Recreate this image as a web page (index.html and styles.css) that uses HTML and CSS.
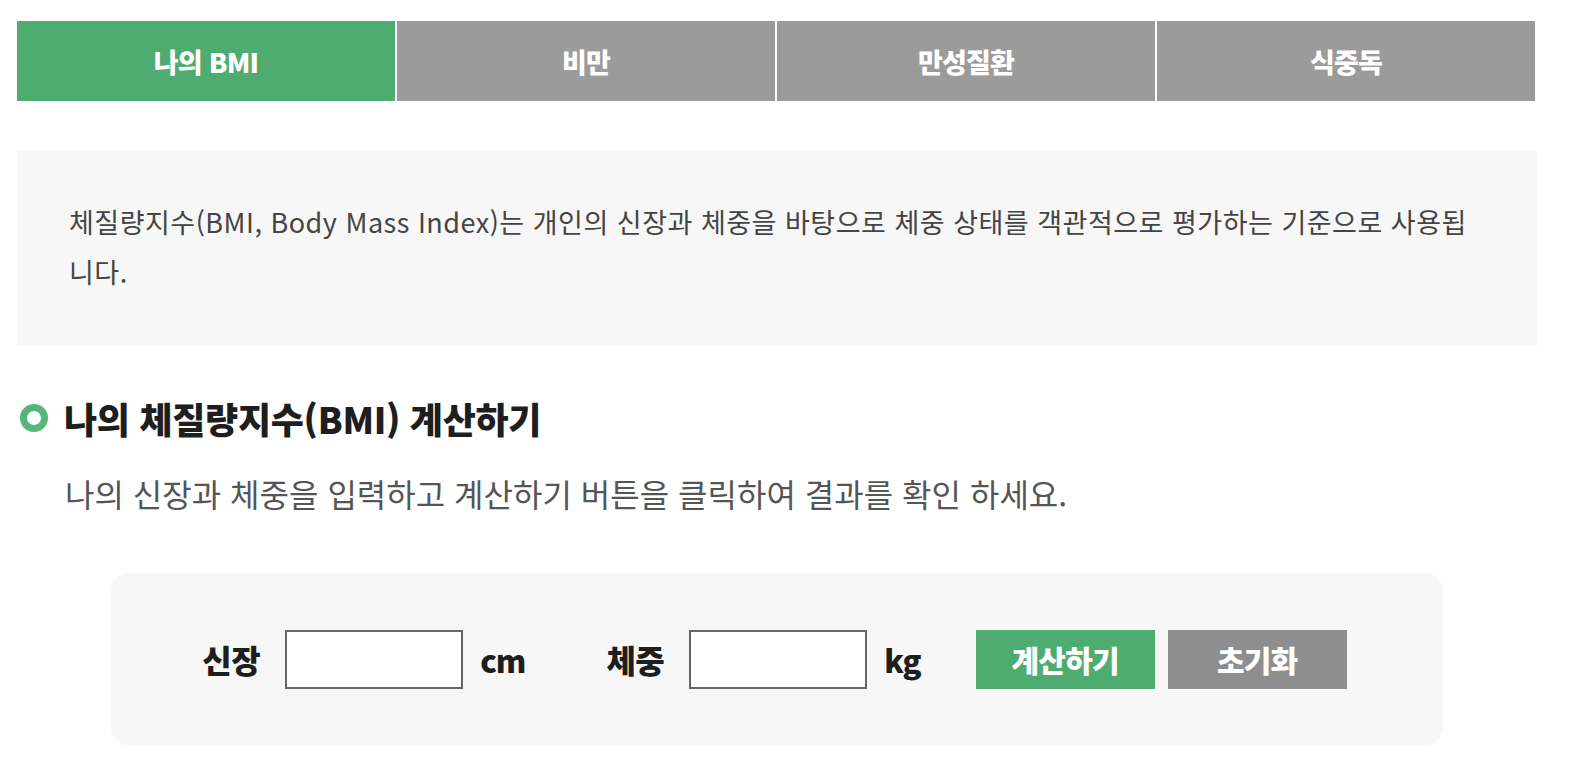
FILE: index.html
```html
<!DOCTYPE html>
<html lang="ko">
<head>
    <meta charset="UTF-8">
    <meta name="viewport" content="width=device-width, initial-scale=1.0">
    <title>나의 BMI</title>
    <link rel="stylesheet" href="styles.css">
</head>
<body>

<div class="wrap">
    <!-- Tabs -->
    <ul class="tabs">
        <li class="tab active">나의 BMI</li>
        <li class="tab">비만</li>
        <li class="tab">만성질환</li>
        <li class="tab">식중독</li>
    </ul>

    <!-- Intro box -->
    <div class="intro">
        <p>체질량지수(BMI, Body Mass Index)는 개인의 신장과 체중을 바탕으로 체중 상태를 객관적으로 평가하는 기준으로 사용됩니다.</p>
    </div>

    <!-- Calculator -->
    <h3 class="title"><span class="ring"></span>나의 체질량지수(BMI) 계산하기</h3>
    <p class="desc">나의 신장과 체중을 입력하고 계산하기 버튼을 클릭하여 결과를 확인 하세요.</p>

    <div class="calc">
        <form class="calc-row" onsubmit="return false;">
            <label class="field">
                <span class="label">신장</span>
                <input type="text" id="height">
                <span class="unit">cm</span>
            </label>
            <label class="field">
                <span class="label">체중</span>
                <input type="text" id="weight">
                <span class="unit">kg</span>
            </label>
            <div class="buttons">
                <button type="submit" class="btn btn-green">계산하기</button>
                <button type="reset" class="btn btn-gray">초기화</button>
            </div>
        </form>
    </div>
</div>

</body>
</html>
```

FILE: styles.css
```css
body {
    font-family: "Noto Sans CJK KR", "Noto Sans", sans-serif;
    margin: 0;
    background-color: #fff;
    color: #222;
}
.wrap {
    width: 1520px;
    padding: 21px 0 0 17px;
}
.tabs {
    display: flex;
    gap: 2px;
    list-style: none;
    margin: 0;
    padding: 0;
    width: 1518px;
}
.tab {
    flex: 1;
    height: 80px;
    display: flex;
    align-items: center;
    justify-content: center;
    background-color: #9b9b9b;
    color: #fff;
    font-size: 27px;
    font-weight: 900;
    letter-spacing: -0.8px;
}
.tab.active {
    background-color: #4fac71;
}
.intro {
    margin-top: 50px;
    background-color: #f7f7f7;
    padding: 46px 52px 49px;
}
.intro p {
    margin: 0;
    font-size: 27px;
    line-height: 50px;
    color: #444;
    letter-spacing: 0.5px;
}
.title {
    display: flex;
    align-items: center;
    margin: 50px 0 0 3px;
    font-size: 36px;
    font-weight: 900;
    letter-spacing: -0.3px;
    color: #1e1e1e;
    height: 44px;
}
.ring {
    width: 14px;
    height: 14px;
    border: 7px solid #55b67a;
    border-radius: 50%;
    margin-right: 16px;
    filter: blur(0.6px);
}
.desc {
    margin: 33px 0 0 48px;
    font-size: 32px;
    color: #555;
    line-height: 40px;
}
.calc {
    margin: 60px 0 0 94px;
    width: 1332px;
    height: 172px;
    background-color: #f7f7f7;
    border-radius: 18px;
    display: flex;
    align-items: center;
    justify-content: center;
}
.calc-row {
    display: flex;
    align-items: center;
    margin-left: -5px;
}
.field {
    display: flex;
    align-items: center;
    margin-right: 81px;
}
.field:nth-child(2) {
    margin-right: 55px;
}
.label {
    font-size: 32px;
    font-weight: 900;
    color: #1e1e1e;
    margin-right: 25px;
    letter-spacing: -0.5px;
}
.field input {
    border: 2px solid #666;
    background-color: #fff;
    padding: 0 8px;
    box-sizing: border-box;
    width: 178px;
    height: 59px;
    font-size: 20px;
}
.unit {
    font-size: 31px;
    font-weight: 900;
    color: #1e1e1e;
    margin-left: 17px;
    letter-spacing: -1px;
}
.buttons {
    display: flex;
    gap: 13px;
}
.btn {
    width: 179px;
    height: 59px;
    border: none;
    color: #fff;
    font-family: inherit;
    font-size: 30px;
    font-weight: 900;
    letter-spacing: -0.8px;
    cursor: pointer;
}
.btn-green {
    background-color: #4fac71;
}
.btn-gray {
    background-color: #8e8e8e;
}
```
